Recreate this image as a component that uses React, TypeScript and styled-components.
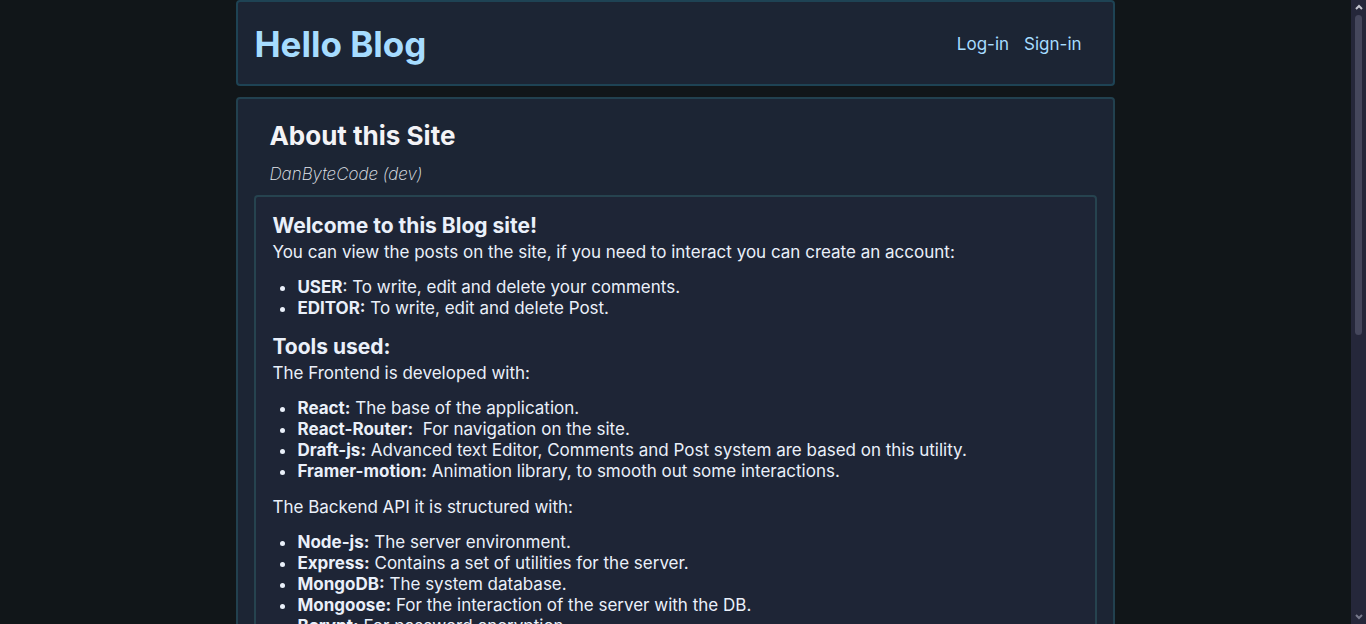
import React from "react";
import styled, { createGlobalStyle } from "styled-components";

const GlobalStyle = createGlobalStyle`
  * { box-sizing: border-box; }
  body {
    margin: 0;
    background: #111619;
    color: #eaf0fa;
    font-family: Inter, "Liberation Sans", sans-serif;
    font-size: 17px;
    line-height: 21px;
  }
  h1, h2, h3, p, ul { margin: 0; }
`;

const Shell = styled.div`
  display: flex;
  height: 100vh;
`;

const Scroller = styled.div`
  flex: 1;
  overflow-y: auto;
  scrollbar-width: none;
`;

const Page = styled.div`
  display: flex;
  flex-direction: column;
  gap: 11px;
  width: 65%;
  margin: 0 auto;
`;

const Header = styled.header`
  display: flex;
  align-items: center;
  justify-content: space-between;
  padding: 20px 31px 18px 16px;
  background: #1c2534;
  border: 2px solid #1e4354;
  border-radius: 4px;
`;

const SiteTitle = styled.h1`
  font-size: 35px;
  line-height: 44px;
  color: #a6dcff;
`;

const Nav = styled.nav`
  display: flex;
  gap: 15px;
`;

const NavLink = styled.a`
  color: #a6dcff;
  text-decoration: none;
`;

const Post = styled.article`
  padding: 20px 16px;
  background: #1c2534;
  border: 2px solid #22414f;
  border-radius: 4px;
`;

const PostHead = styled.div`
  display: flex;
  flex-direction: column;
  gap: 11px;
  padding: 0 15px 10px;
`;

const PostTitle = styled.h2`
  font-size: 26px;
  line-height: 34px;
  color: #f3f3f6;
`;

const Author = styled.p`
  font-style: italic;
  font-weight: 200;
  color: #e4e8ee;
`;

const Body = styled.div`
  padding: 16px;
  background: #1e2536;
  border: 2px solid #26434f;
  border-radius: 4px;
`;

const Heading = styled.h3`
  margin-bottom: 3px;
  font-size: 21px;
  line-height: 26px;
`;

const List = styled.ul`
  margin: 14px 0 15px;
  padding-left: 25px;
`;

const ScrollTrack = styled.div`
  display: flex;
  flex-direction: column;
  align-items: center;
  gap: 4px;
  width: 15px;
  padding: 4px 0;
  background: #25273a;
`;

const ScrollThumb = styled.div`
  width: 7px;
  height: 52%;
  margin-bottom: auto;
  border-radius: 4px;
  background: #45475c;
`;

const Arrow = ({ down = false }: { down?: boolean }) => (
  <svg width="8" height="7" viewBox="0 0 8 7" fill="none" aria-hidden="true">
    <path
      d={down ? "M1 2L4 5L7 2" : "M1 5L4 2L7 5"}
      stroke={down ? "#77798b" : "#c5c6d0"}
      strokeWidth="2"
    />
  </svg>
);

type Item = [term: string, text: string];

const roles: Item[] = [
  ["EDITOR:", " To write, edit and delete Post."],
];

const frontend: Item[] = [
  ["React:", " The base of the application."],
  ["React-Router:", " \u00a0For navigation on the site."],
  ["Draft-js:", " Advanced text Editor, Comments and Post system are based on this utility."],
  ["Framer-motion:", " Animation library, to smooth out some interactions."],
];

const backend: Item[] = [
  ["Node-js:", " The server environment."],
  ["Express:", " Contains a set of utilities for the server."],
  ["MongoDB:", " The system database."],
  ["Mongoose:", " For the interaction of the server with the DB."],
  ["Bcrypt:", " For password encryption."],
];

const Items = ({ items }: { items: Item[] }) => (
  <>
    {items.map(([term, text]) => (
      <li key={term}>
        <strong>{term}</strong>
        {text}
      </li>
    ))}
  </>
);

export default function App() {
  return (
    <>
      <GlobalStyle />
      <Shell>
        <Scroller>
          <Page>
            <Header>
              <SiteTitle>Hello Blog</SiteTitle>
              <Nav>
                <NavLink href="#login">Log-in</NavLink>
                <NavLink href="#signin">Sign-in</NavLink>
              </Nav>
            </Header>
            <Post>
              <PostHead>
                <PostTitle>About this Site</PostTitle>
                <Author>DanByteCode (dev)</Author>
              </PostHead>
              <Body>
                <Heading>Welcome to this Blog site!</Heading>
                <p>You can view the posts on the site, if you need to interact you can create an account:</p>
                <List>
                  <li>
                    <strong>USER</strong>: To write, edit and delete your comments.
                  </li>
                  <Items items={roles} />
                </List>
                <Heading>Tools used:</Heading>
                <p>The Frontend is developed with:</p>
                <List>
                  <Items items={frontend} />
                </List>
                <p>The Backend API it is structured with:</p>
                <List>
                  <Items items={backend} />
                </List>
              </Body>
            </Post>
          </Page>
        </Scroller>
        <ScrollTrack aria-hidden="true">
          <Arrow />
          <ScrollThumb />
          <Arrow down />
        </ScrollTrack>
      </Shell>
    </>
  );
}
